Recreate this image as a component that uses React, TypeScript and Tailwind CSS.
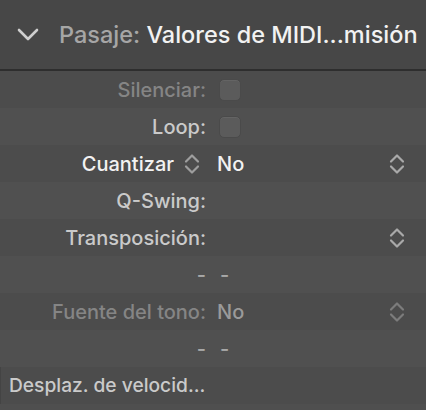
import React from "react";

const UpDown = ({ color = "#a9a9a9" }: { color?: string }) => (
  <svg width="18" height="24" viewBox="0 0 18 24" fill="none">
    <path d="M3 9.5 L9 3.5 L15 9.5" stroke={color} strokeWidth="2.2" strokeLinecap="round" strokeLinejoin="round" />
    <path d="M3 14.5 L9 20.5 L15 14.5" stroke={color} strokeWidth="2.2" strokeLinecap="round" strokeLinejoin="round" />
  </svg>
);

const Check = () => (
  <div className="w-[22px] h-[22px] rounded-[5px] bg-[#5b5b5b] border border-[#4a4a4a] shadow-[inset_0_1px_0_rgba(255,255,255,0.06)]" />
);

type RowProps = {
  label?: React.ReactNode;
  value?: React.ReactNode;
  right?: React.ReactNode;
  dark?: boolean;
};

const Row = ({ label, value, right, dark }: RowProps) => (
  <div className={`h-[37px] grid grid-cols-[206px_1fr] items-center ${dark ? "bg-[#4c4c4c]" : "bg-[#505050]"}`}>
    <div className="flex justify-end items-center">{label}</div>
    <div className="flex items-center justify-between pl-[11px] pr-[20px]">
      <div className="flex items-center">{value}</div>
      <div className="flex items-center">{right}</div>
    </div>
  </div>
);

export default function App() {
  return (
    <div
      className="w-[426px] h-[410px] bg-[#4f4f4f] overflow-hidden text-[20px] font-medium"
      style={{ fontFamily: "Inter, 'Liberation Sans', sans-serif" }}
    >
      <div className="h-[69px] bg-[#474747] flex items-center pl-[17px] border-b-2 border-[#2e2e2e] box-content">
        <svg width="22" height="14" viewBox="0 0 22 14" fill="none" className="mr-[20px]">
          <path d="M2 2 L11 11 L20 2" stroke="#cfcfcf" strokeWidth="2.6" strokeLinecap="round" strokeLinejoin="round" />
        </svg>
        <span className="text-[23.5px] whitespace-nowrap">
          <span className="text-[#a6a6a6]">Pasaje: </span>
          <span className="text-[#f2f2f2]">Valores de MIDI...misión</span>
        </span>
      </div>
      <Row dark label={<span className="text-[#858585]">Silenciar:</span>} value={<div className="ml-[2px]"><Check /></div>} />
      <Row label={<span className="text-[#cacaca]">Loop:</span>} value={<div className="ml-[2px]"><Check /></div>} />
      <Row
        dark
        label={
          <span className="flex items-center text-[#f2f2f2]">
            Cuantizar
            <span className="ml-[9px] mr-[5px] flex"><UpDown color="#9e9e9e" /></span>
          </span>
        }
        value={<span className="text-[#f2f2f2]">No</span>}
        right={<UpDown />}
      />
      <Row label={<span className="text-[#cacaca]">Q-Swing:</span>} />
      <Row dark label={<span className="text-[#cacaca]">Transposición:</span>} right={<UpDown />} />
      <Row label={<span className="text-[#a8a8a8]">-</span>} value={<span className="text-[#a8a8a8] ml-[3px]">-</span>} />
      <Row
        dark
        label={<span className="text-[#858585]">Fuente del tono:</span>}
        value={<span className="text-[#9a9a9a]">No</span>}
        right={<UpDown color="#7c7c7c" />}
      />
      <Row label={<span className="text-[#a8a8a8]">-</span>} value={<span className="text-[#a8a8a8] ml-[3px]">-</span>} />
      <div className="h-[37px] bg-[#4c4c4c] flex items-center pl-[8px] border-l border-[#444]">
        <span className="text-[#cacaca] text-[19.2px] whitespace-nowrap">Desplaz. de velocid...</span>
      </div>
    </div>
  );
}
